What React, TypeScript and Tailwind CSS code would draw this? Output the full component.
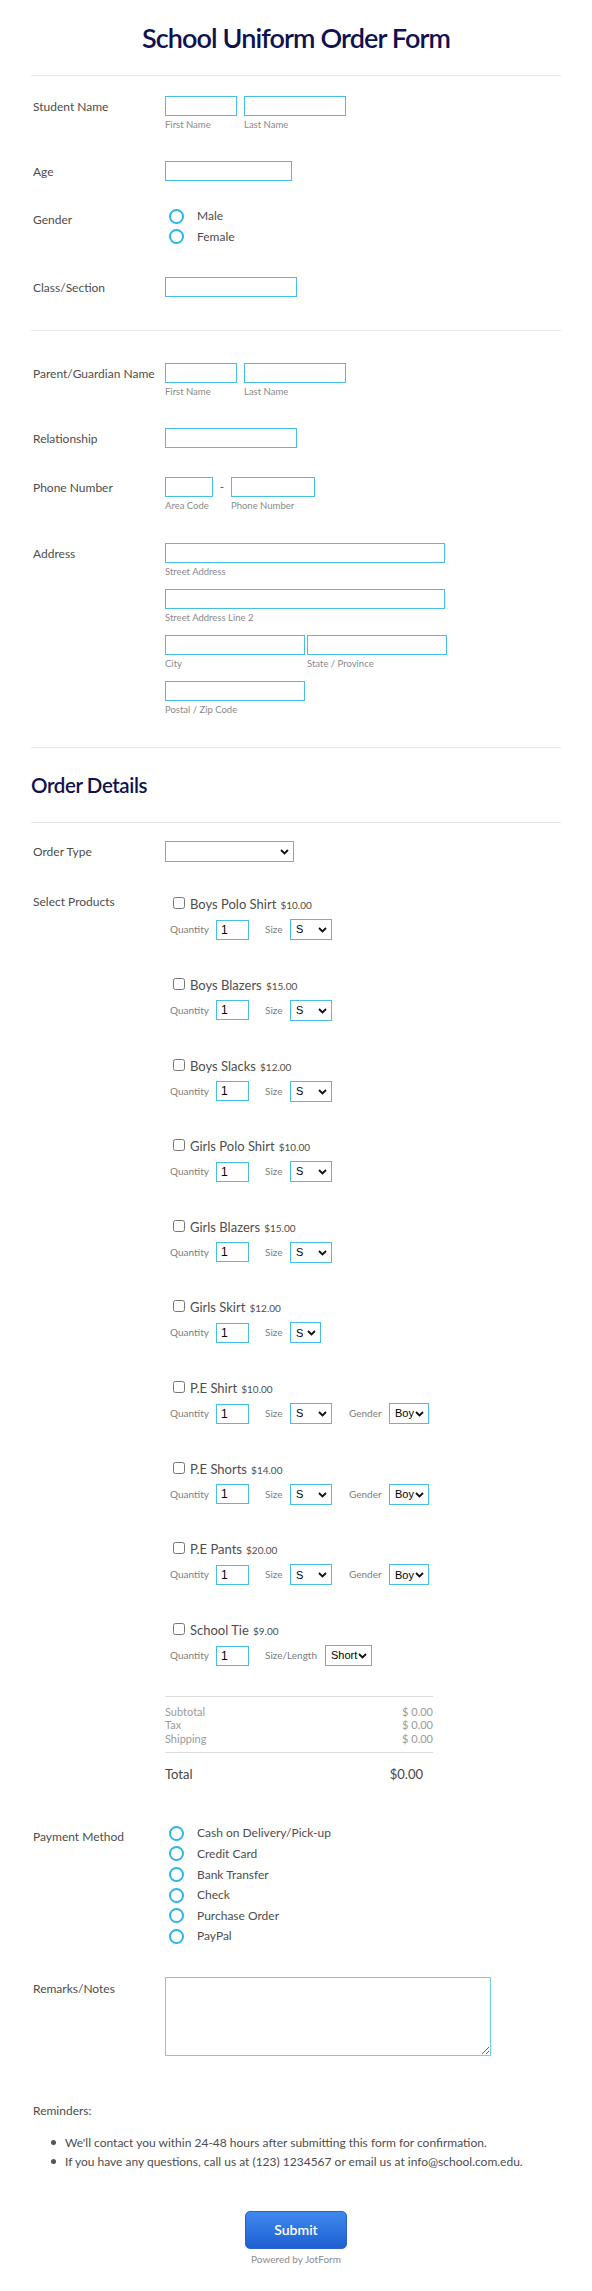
import React from 'react';

const products = [
  { name: 'Boys Polo Shirt', price: '$10.00', kind: 'size' },
  { name: 'Boys Blazers', price: '$15.00', kind: 'size' },
  { name: 'Boys Slacks', price: '$12.00', kind: 'size' },
  { name: 'Girls Polo Shirt', price: '$10.00', kind: 'size' },
  { name: 'Girls Blazers', price: '$15.00', kind: 'size' },
  { name: 'Girls Skirt', price: '$12.00', kind: 'narrow' },
  { name: 'P.E Shirt', price: '$10.00', kind: 'gender' },
  { name: 'P.E Shorts', price: '$14.00', kind: 'gender' },
  { name: 'P.E Pants', price: '$20.00', kind: 'gender' },
  { name: 'School Tie', price: '$9.00', kind: 'tie' },
];

const payments = ['Cash on Delivery/Pick-up', 'Credit Card', 'Bank Transfer', 'Check', 'Purchase Order', 'PayPal'];

function Row({ label, labelPt = 'pt-[3px]', className = '', children }) {
  return (
    <div className={`flex ${className}`}>
      <div className={`w-[134px] shrink-0 pl-[2px] text-[12px] leading-[16px] text-[#4d4d4d] ${labelPt}`}>{label}</div>
      <div className="flex-1">{children}</div>
    </div>
  );
}

function Field({ w, sub, className = '' }) {
  return (
    <div className={className}>
      <input className={`block h-[20px] ${w} border border-[#45bfe9] bg-white`} />
      {sub && <div className="mt-[3px] text-[9.5px] leading-[12px] text-[#8a8a8a]">{sub}</div>}
    </div>
  );
}

function Sel({ w, value = '' }) {
  return (
    <div className={`relative h-[21px] ${w}`}>
      <select className="block h-full w-full appearance-none border border-[#45bfe9] bg-white pl-[5px] text-[11px] text-black [font-family:Liberation_Sans,Arial,sans-serif]">
        <option>{value}</option>
      </select>
      <svg className="pointer-events-none absolute right-[5px] top-[8px]" width="9" height="6" viewBox="0 0 9 6">
        <path d="M1 1l3.5 3.5L8 1" stroke="#111" strokeWidth="1.8" fill="none" />
      </svg>
    </div>
  );
}

function Radio({ label }) {
  return (
    <label className="flex h-[20.6px] items-center pl-[4px]">
      <span className="h-[15px] w-[15px] rounded-full border-2 border-[#2bb6e6] bg-white" />
      <span className="ml-[13px] text-[12px] text-[#4d4d4d]">{label}</span>
    </label>
  );
}

function Product({ p }) {
  return (
    <div>
      <label className="flex h-[18px] items-center pl-[8px]">
        <input type="checkbox" className="m-0 h-[12px] w-[12px]" />
        <span className="ml-[5px] text-[#4d4d4d]">
          <span className="text-[13px]">{p.name}</span> <span className="text-[10px]">{p.price}</span>
        </span>
      </label>
      <div className="mt-[7px] flex h-[21px] items-center pl-[5px] text-[10px] text-[#7d7d7d]">
        <span className="w-[46px]">Quantity</span>
        <input
          defaultValue="1"
          className="h-[20px] w-[33px] border border-[#45bfe9] bg-white pl-[4px] text-[12px] text-black [font-family:Liberation_Sans,Arial,sans-serif]"
        />
        {p.kind === 'tie' ? (
          <>
            <span className="ml-[16px] w-[60px]">Size/Length</span>
            <Sel w="w-[47px]" value="Short" />
          </>
        ) : (
          <>
            <span className="ml-[16px] w-[25px]">Size</span>
            <Sel w={p.kind === 'narrow' ? 'w-[31px]' : 'w-[42px]'} value="S" />
          </>
        )}
        {p.kind === 'gender' && (
          <>
            <span className="ml-[17px] w-[40px]">Gender</span>
            <Sel w="w-[40px]" value="Boy" />
          </>
        )}
      </div>
    </div>
  );
}

export default function App() {
  return (
    <div className="min-h-[2291px] w-full bg-white px-[31px] [font-family:Lato,'Open_Sans',sans-serif]">
      <h1 className="pt-[21px] text-center text-[27px] font-semibold leading-[34px] tracking-[-0.9px] text-[#10124f]">
        School Uniform Order Form
      </h1>
      <div className="mt-[20px] h-px bg-[#e8e8e8]" />

      <Row label="Student Name" className="mt-[20px]">
        <div className="flex gap-[7px]">
          <Field w="w-[72px]" sub="First Name" />
          <Field w="w-[102px]" sub="Last Name" />
        </div>
      </Row>
      <Row label="Age" className="mt-[30px]">
        <Field w="w-[127px]" />
      </Row>
      <Row label="Gender" labelPt="pt-[6px]" className="mt-[25px]">
        <Radio label="Male" />
        <Radio label="Female" />
      </Row>
      <Row label="Class/Section" className="mt-[30px]">
        <Field w="w-[132px]" />
      </Row>
      <div className="mt-[33px] h-px bg-[#e8e8e8]" />

      <Row label="Parent/Guardian Name" className="mt-[32px]">
        <div className="flex gap-[7px]">
          <Field w="w-[72px]" sub="First Name" />
          <Field w="w-[102px]" sub="Last Name" />
        </div>
      </Row>
      <Row label="Relationship" className="mt-[30px]">
        <Field w="w-[132px]" />
      </Row>
      <Row label="Phone Number" className="mt-[29px]">
        <div className="flex">
          <Field w="w-[48px]" sub="Area Code" />
          <span className="w-[18px] text-center text-[12px] leading-[20px] text-[#555]">-</span>
          <Field w="w-[84px]" sub="Phone Number" />
        </div>
      </Row>
      <Row label="Address" className="mt-[31px]">
        <Field w="w-[280px]" sub="Street Address" />
        <Field w="w-[280px]" sub="Street Address Line 2" className="mt-[11px]" />
        <div className="mt-[11px] flex gap-[2px]">
          <Field w="w-[140px]" sub="City" />
          <Field w="w-[140px]" sub="State / Province" />
        </div>
        <Field w="w-[140px]" sub="Postal / Zip Code" className="mt-[11px]" />
      </Row>
      <div className="mt-[31px] h-px bg-[#e8e8e8]" />

      <h2 className="mt-[24px] text-[20.5px] font-semibold leading-[26px] tracking-[-0.4px] text-[#10124f]">Order Details</h2>
      <div className="mt-[24px] h-px bg-[#e8e8e8]" />

      <Row label="Order Type" className="mt-[18px]">
        <Sel w="w-[129px]" />
      </Row>
      <Row label="Select Products" labelPt="pt-[0px]" className="mt-[32px]">
        <div className="flex flex-col gap-[34.67px]">
          {products.map((p) => (
            <Product key={p.name} p={p} />
          ))}
        </div>
        <div className="mt-[30px] w-[268px] border-t border-[#dcdcdc] pt-[7.5px] pb-[7px] text-[11px] leading-[13.5px] text-[#9a9a9a]">
          {['Subtotal', 'Tax', 'Shipping'].map((t) => (
            <div key={t} className="flex justify-between">
              <span>{t}</span>
              <span>$ 0.00</span>
            </div>
          ))}
        </div>
        <div className="flex w-[268px] justify-between border-t border-[#dcdcdc] pt-[12px] pr-[10px] text-[13px] leading-[18px] text-[#444]">
          <span>Total</span>
          <span>$0.00</span>
        </div>
      </Row>

      <Row label="Payment Method" labelPt="pt-[6px]" className="mt-[40px]">
        {payments.map((p) => (
          <Radio key={p} label={p} />
        ))}
      </Row>
      <Row label="Remarks/Notes" labelPt="pt-[4px]" className="mt-[30px]">
        <textarea className="block h-[79px] w-[326px] border border-[#6fcdee] bg-white" />
      </Row>

      <div className="mt-[47px] pl-[2px] text-[12px] leading-[16px] text-[#4d4d4d]">Reminders:</div>
      <ul className="mt-[14px] pl-[20px] text-[12px] leading-[19px] text-[#4d4d4d]">
        <li className="flex items-center">
          <span className="h-[5px] w-[5px] shrink-0 rounded-full bg-[#555]" />
          <span className="ml-[9px]">We'll contact you within 24-48 hours after submitting this form for confirmation.</span>
        </li>
        <li className="flex items-center">
          <span className="h-[5px] w-[5px] shrink-0 rounded-full bg-[#555]" />
          <span className="ml-[9px]">If you have any questions, call us at (123) 1234567 or email us at info@school.com.edu.</span>
        </li>
      </ul>

      <div className="mt-[40px] flex flex-col items-center pb-[30px]">
        <button className="h-[38px] w-[102px] rounded-[5px] border border-[#2a62c9] bg-gradient-to-b from-[#4088ee] to-[#1d5fd2] text-[14px] font-semibold text-white">
          Submit
        </button>
        <div className="mt-[4px] text-[10px] leading-[12px] text-[#8a8a8a]">Powered by JotForm</div>
      </div>
    </div>
  );
}
